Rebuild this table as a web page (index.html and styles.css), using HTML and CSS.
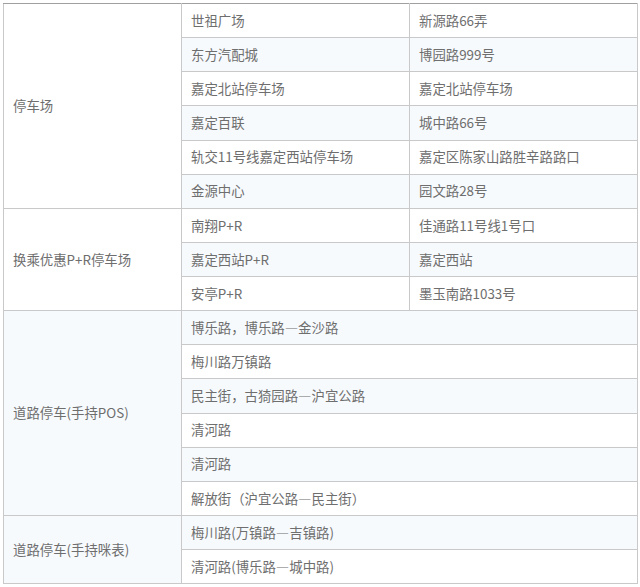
FILE: index.html
```html
<!DOCTYPE html>
<html lang="zh-CN">
<head>
<meta charset="utf-8">
<link rel="stylesheet" href="styles.css">
</head>
<body>
<table class="parking">
  <colgroup>
    <col class="c1"><col class="c2"><col class="c3">
  </colgroup>
  <tbody>
    <tr class="g-start"><td class="cat" rowspan="6">停车场</td><td>世祖广场</td><td>新源路66弄</td></tr>
    <tr><td>东方汽配城</td><td>博园路999号</td></tr>
    <tr><td>嘉定北站停车场</td><td>嘉定北站停车场</td></tr>
    <tr><td>嘉定百联</td><td>城中路66号</td></tr>
    <tr><td>轨交11号线嘉定西站停车场</td><td>嘉定区陈家山路胜辛路路口</td></tr>
    <tr><td>金源中心</td><td>园文路28号</td></tr>
    <tr class="g-start"><td class="cat" rowspan="3">换乘优惠P+R停车场</td><td>南翔P+R</td><td>佳通路11号线1号口</td></tr>
    <tr><td>嘉定西站P+R</td><td>嘉定西站</td></tr>
    <tr><td>安亭P+R</td><td>墨玉南路1033号</td></tr>
    <tr class="g-start"><td class="cat" rowspan="6">道路停车(手持POS)</td><td colspan="2">博乐路，博乐路—金沙路</td></tr>
    <tr><td colspan="2">梅川路万镇路</td></tr>
    <tr><td colspan="2">民主街，古猗园路—沪宜公路</td></tr>
    <tr><td colspan="2">清河路</td></tr>
    <tr><td colspan="2">清河路</td></tr>
    <tr><td colspan="2">解放街（沪宜公路—民主街）</td></tr>
    <tr class="g-start"><td class="cat" rowspan="2">道路停车(手持咪表)</td><td colspan="2">梅川路(万镇路—吉镇路)</td></tr>
    <tr><td colspan="2">清河路(博乐路—城中路)</td></tr>
  </tbody>
</table>
</body>
</html>
```

FILE: styles.css
```css
html, body {
  margin: 0;
  padding: 0;
  background: #ffffff;
}

body {
  padding: 3px 0 0 3px;
  font-family: "Noto Sans CJK SC", "Noto Sans", sans-serif;
  font-size: 13.4px;
  color: #6e6e6e;
}

.parking {
  border-collapse: collapse;
  width: 634px;
  table-layout: fixed;
  border: 1px solid #a0a0a0;
}

.c1 { width: 178px; }
.c2 { width: 228px; }
.c3 { width: 228px; }

.parking td {
  height: 34.13px;
  padding: 0 9px;
  border: 1px solid #c9c9c9;
  vertical-align: middle;
  white-space: nowrap;
  line-height: 1;
  box-sizing: border-box;
}

.parking tr:nth-child(even) td {
  background: #f7fafd;
}

.parking tr.g-start td {
  border-top: 1px solid #a0a0a0;
}
```
